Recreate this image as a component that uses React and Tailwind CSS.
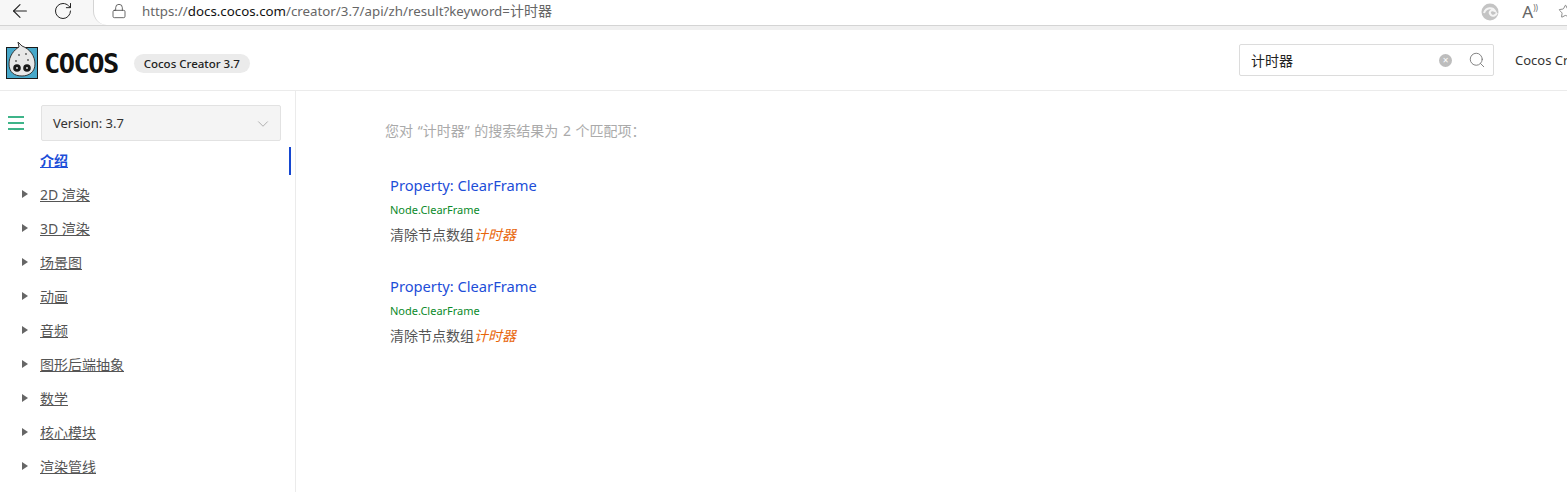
import { ArrowLeft, RotateCw, Lock, Search, ChevronDown, Star } from "lucide-react"

const font = { fontFamily: '"Noto Sans", "Noto Sans CJK SC", sans-serif' }

const navItems = ["2D 渲染", "3D 渲染", "场景图", "动画", "音频", "图形后端抽象", "数学", "核心模块", "渲染管线"]

function Logo() {
  return (
    <svg width="34" height="38" viewBox="0 0 34 38" className="shrink-0">
      <rect x="0.5" y="6.5" width="31" height="31" fill="#47a8ca" stroke="#1a1a1a" />
      <path d="M12 1 L16 5 C24 8 29 15 29 23 C29 31 23 35 16 35 C8 35 3 31 3 23 C3 15 8 9 13 6 Z" fill="#e8e8e8" stroke="#333" strokeWidth="1" />
      <circle cx="11" cy="27" r="3.8" fill="#1a1a1a" />
      <circle cx="21" cy="27" r="3.8" fill="#1a1a1a" />
      <circle cx="11" cy="27" r="1" fill="#ddd" />
      <circle cx="21" cy="27" r="1" fill="#ddd" />
      <circle cx="13" cy="14" r="0.9" fill="#555" />
      <circle cx="20" cy="13" r="0.9" fill="#555" />
      <circle cx="22" cy="19" r="0.9" fill="#555" />
      <circle cx="10" cy="20" r="0.9" fill="#555" />
    </svg>
  )
}

function BrowserBar() {
  return (
    <div className="flex h-[30px] bg-[#f7f7f7] border-b-4 border-[#f0f0f0]">
      <div className="flex flex-1 h-[26px] border-b border-[#d4d4d4]">
        <div className="flex w-[93px] items-center shrink-0 pl-[9px] gap-[22px] pb-[4px]">
          <ArrowLeft size={22} strokeWidth={1.2} className="text-[#222]" />
          <RotateCw size={20} strokeWidth={1.2} className="text-[#222]" />
        </div>
        <div className="flex flex-1 items-center bg-white rounded-bl-[14px] border-l border-[#d4d4d4] pl-[17px]">
          <Lock size={16} strokeWidth={1.2} className="text-[#444] mb-[3px]" />
          <div className="ml-[15px] text-[13.3px] mb-[3px] text-[#666] whitespace-nowrap">
            https://<span className="text-[#111]">docs.cocos.com</span>/creator/3.7/api/zh/result?keyword=<span className="text-[14px]">计时器</span>
          </div>
          <div className="ml-auto flex items-center mb-[2px]">
            <svg width="18" height="18" viewBox="0 0 18 18" className="mr-[23px]">
              <circle cx="9" cy="9" r="8.5" fill="#c4c4c4" />
              <path d="M3 10 C5 4 12 4 14 8 C10 6 7 9 10 12 C12 14 15 12 16 10" fill="none" stroke="#f4f4f4" strokeWidth="2" />
            </svg>
            <span className="text-[17px] text-[#666] leading-none">A</span>
            <span className="text-[8px] text-[#666] leading-none mb-[8px] mr-[20px]">))</span>
            <Star size={15} strokeWidth={1.2} className="text-[#666] -mr-[6px]" />
          </div>
        </div>
      </div>
    </div>
  )
}

function Header() {
  return (
    <header className="flex h-[61px] items-center border-b border-[#ebebeb] bg-white pl-[6px]">
      <Logo />
      <span className="ml-[4px] mt-[6px] text-[27px] leading-none font-bold tracking-[-1.5px] text-[#111]" style={{ fontFamily: '"DejaVu Sans Mono", monospace' }}>COCOS</span>
      <span className="ml-[16px] mt-[7px] flex h-[19px] w-[116px] items-center justify-center rounded-full bg-[#ebebeb] text-[11.5px] font-medium text-[#222]">Cocos Creator 3.7</span>
      <div className="ml-auto flex h-[32px] w-[255px] items-center rounded-[2px] border border-[#dcdcdc] pl-[11px] pr-[7px]">
        <span className="text-[14px] text-[#222]">计时器</span>
        <span className="ml-auto flex h-[13px] w-[13px] items-center justify-center rounded-full bg-[#bdbdbd] text-[10px] leading-none text-white">×</span>
        <Search size={18} strokeWidth={1.2} className="ml-[16px] text-[#777]" />
      </div>
      <div className="ml-[21px] mt-[2px] w-[52px] shrink-0 whitespace-nowrap text-[13px] text-[#333]">Cocos Cr</div>
    </header>
  )
}

function Sidebar() {
  return (
    <aside className="w-[296px] shrink-0 border-r border-[#ebebeb] pt-[14px]">
      <div className="flex items-center">
        <div className="ml-[8px] flex w-[16px] flex-col gap-[4px]">
          <div className="h-[2px] bg-[#3eb489]" />
          <div className="h-[2px] bg-[#3eb489]" />
          <div className="h-[2px] bg-[#3eb489]" />
        </div>
        <div className="ml-[17px] flex h-[36px] w-[240px] items-center justify-between rounded-[2px] border border-[#e2e2e2] bg-[#f4f4f4] pl-[11px] pr-[8px] pt-[1px] text-[13px] text-[#333]">
          Version: 3.7
          <ChevronDown size={18} strokeWidth={1} className="text-[#999]" />
        </div>
      </div>
      <div className="relative mt-[6px] h-[28px] pl-[40px] text-[14px] leading-[28px] font-bold text-[#1d4ed8] underline">
        介绍
        <div className="absolute right-[4px] top-0 h-[28px] w-[2px] bg-[#1547d0]" />
      </div>
      <ul className="mt-[2px]">
        {navItems.map(item => (
          <li key={item} className="flex h-[34px] items-center text-[14px] text-[#555]">
            <span className="ml-[22px] h-0 w-0 border-y-[4px] border-l-[6px] border-y-transparent border-l-[#666]" />
            <a className="ml-[12px] underline" href="#">{item}</a>
          </li>
        ))}
      </ul>
    </aside>
  )
}

function Result() {
  return (
    <div className="mb-[31px]">
      <div className="text-[14.7px] leading-[20px] text-[#1d4ed8]">Property: ClearFrame</div>
      <div className="mt-[7px] text-[11px] leading-[16px] text-[#0a8a2a]">Node.ClearFrame</div>
      <div className="mt-[7px] text-[14px] leading-[20px] text-[#555]">
        清除节点数组<em className="text-[#e8650a]">计时器</em>
      </div>
    </div>
  )
}

export default function App() {
  return (
    <div className="flex h-[492px] w-[1567px] flex-col overflow-hidden bg-white" style={font}>
      <BrowserBar />
      <Header />
      <div className="flex flex-1 overflow-hidden">
        <Sidebar />
        <main className="pl-[89px] pt-[30px]">
          <p className="text-[14px] leading-[20px] text-[#aaa] [word-spacing:1px]">您对 “计时器” 的搜索结果为 2 个匹配项：</p>
          <div className="mt-[34px] pl-[5px]">
            <Result />
            <Result />
          </div>
        </main>
      </div>
    </div>
  )
}
